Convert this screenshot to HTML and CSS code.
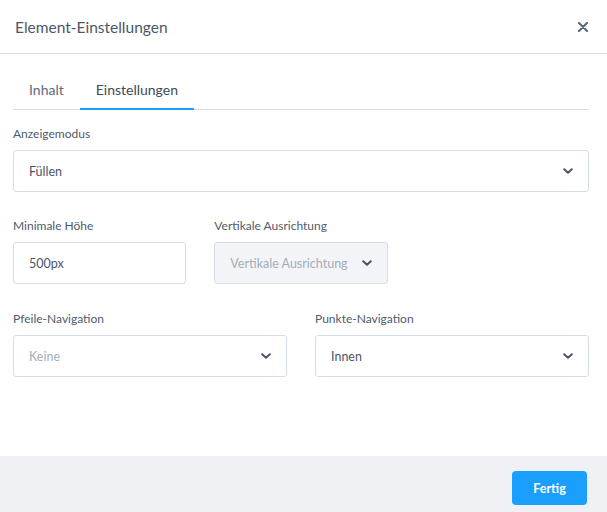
FILE: index.html
```html
<!DOCTYPE html>
<html lang="de">
<head>
<meta charset="utf-8">
<title>Element-Einstellungen</title>
<link rel="stylesheet" href="styles.css">
</head>
<body>
<div class="modal">
  <header class="modal-header">
    <h1 class="modal-title">Element-Einstellungen</h1>
    <button class="close-btn" aria-label="Schließen">
      <svg width="10" height="10" viewBox="0 0 10 10"><path d="M1 1 L9 9 M9 1 L1 9" stroke="currentColor" stroke-width="2" stroke-linecap="round"/></svg>
    </button>
  </header>
  <main class="modal-body">
    <nav class="tabs">
      <span class="tab">Inhalt</span>
      <span class="tab tab-active">Einstellungen</span>
    </nav>
    <div class="group">
      <label class="label">Anzeigemodus</label>
      <div class="field select"><span class="value">Füllen</span><svg class="chev" width="10" height="6" viewBox="0 0 10 6"><path d="M1.2 1.2 L5 4.8 L8.8 1.2" fill="none" stroke="currentColor" stroke-width="2" stroke-linecap="round" stroke-linejoin="round"/></svg></div>
    </div>
    <div class="grid3 group">
      <div>
        <label class="label">Minimale Höhe</label>
        <div class="field"><span class="value">500px</span></div>
      </div>
      <div>
        <label class="label">Vertikale Ausrichtung</label>
        <div class="field select disabled"><span class="value placeholder">Vertikale Ausrichtung</span><svg class="chev" width="10" height="6" viewBox="0 0 10 6"><path d="M1.2 1.2 L5 4.8 L8.8 1.2" fill="none" stroke="currentColor" stroke-width="2" stroke-linecap="round" stroke-linejoin="round"/></svg></div>
      </div>
    </div>
    <div class="grid2 group">
      <div>
        <label class="label">Pfeile-Navigation</label>
        <div class="field select"><span class="value placeholder">Keine</span><svg class="chev" width="10" height="6" viewBox="0 0 10 6"><path d="M1.2 1.2 L5 4.8 L8.8 1.2" fill="none" stroke="currentColor" stroke-width="2" stroke-linecap="round" stroke-linejoin="round"/></svg></div>
      </div>
      <div>
        <label class="label">Punkte-Navigation</label>
        <div class="field select"><span class="value">Innen</span><svg class="chev" width="10" height="6" viewBox="0 0 10 6"><path d="M1.2 1.2 L5 4.8 L8.8 1.2" fill="none" stroke="currentColor" stroke-width="2" stroke-linecap="round" stroke-linejoin="round"/></svg></div>
      </div>
    </div>
  </main>
  <footer class="modal-footer">
    <button class="btn-primary">Fertig</button>
  </footer>
</div>
</body>
</html>
```
FILE: styles.css
```css
* { box-sizing: border-box; }
html, body { margin: 0; padding: 0; background: #fff; }
body {
  font-family: Lato, "Noto Sans", sans-serif;
  color: #4a5568;
  width: 607px;
  height: 512px;
  overflow: hidden;
}
.modal {
  width: 607px;
  height: 512px;
  display: flex;
  flex-direction: column;
  overflow: hidden;
}
.modal-header {
  height: 54px;
  flex: none;
  border-bottom: 1px solid #d6dde4;
  display: flex;
  align-items: center;
  justify-content: space-between;
  padding: 0 19px 0 15px;
}
.modal-title {
  margin: 0;
  font-size: 15.5px;
  font-weight: 400;
  color: #4b5869;
  line-height: 22px;
}
.close-btn {
  border: 0;
  background: none;
  padding: 0;
  width: 10px;
  height: 10px;
  color: #566779;
  display: flex;
}
.modal-body {
  flex: 1;
  padding: 16px 18px 0 13px;
}
.tabs {
  display: flex;
  border-bottom: 1px solid #d6dde4;
}
.tab {
  font-size: 14px;
  line-height: 20px;
  padding: 10px 16px 8px;
  color: #5c6b7b;
  border-bottom: 2px solid transparent;
  margin-bottom: -1px;
}
.tab-active {
  color: #3d4a5a;
  border-bottom-color: #1a9fff;
}
.group { margin-top: 15px; }
.grid3 {
  display: grid;
  grid-template-columns: repeat(3, 1fr);
  column-gap: 28px;
  margin-top: 25px;
}
.grid2 {
  display: grid;
  grid-template-columns: repeat(2, 1fr);
  column-gap: 28px;
  margin-top: 26px;
}
.label {
  display: block;
  font-size: 12px;
  line-height: 18px;
  color: #4f5b6b;
  margin-bottom: 7px;
}
.field {
  height: 42px;
  border: 1px solid #d6dde4;
  border-radius: 3px;
  display: flex;
  align-items: center;
  justify-content: space-between;
  padding: 0 15px 0 15px;
  background: #fff;
}
.value {
  font-size: 12.5px;
  color: #4a5568;
  white-space: nowrap;
}
.placeholder { color: #a3adba; }
.disabled { background: #f3f4f7; }
.chev { color: #4a5568; flex: none; }
.modal-footer {
  flex: none;
  height: 56px;
  background: #f0f1f5;
  display: flex;
  justify-content: flex-end;
  align-items: flex-start;
  padding: 15px 20px 0 0;
}
.btn-primary {
  font-family: Lato, "Noto Sans", sans-serif;
  width: 75px;
  height: 34px;
  border: 0;
  border-radius: 4px;
  background: #1a9fff;
  color: #fff;
  font-size: 12.5px;
  font-weight: 700;
}
```
